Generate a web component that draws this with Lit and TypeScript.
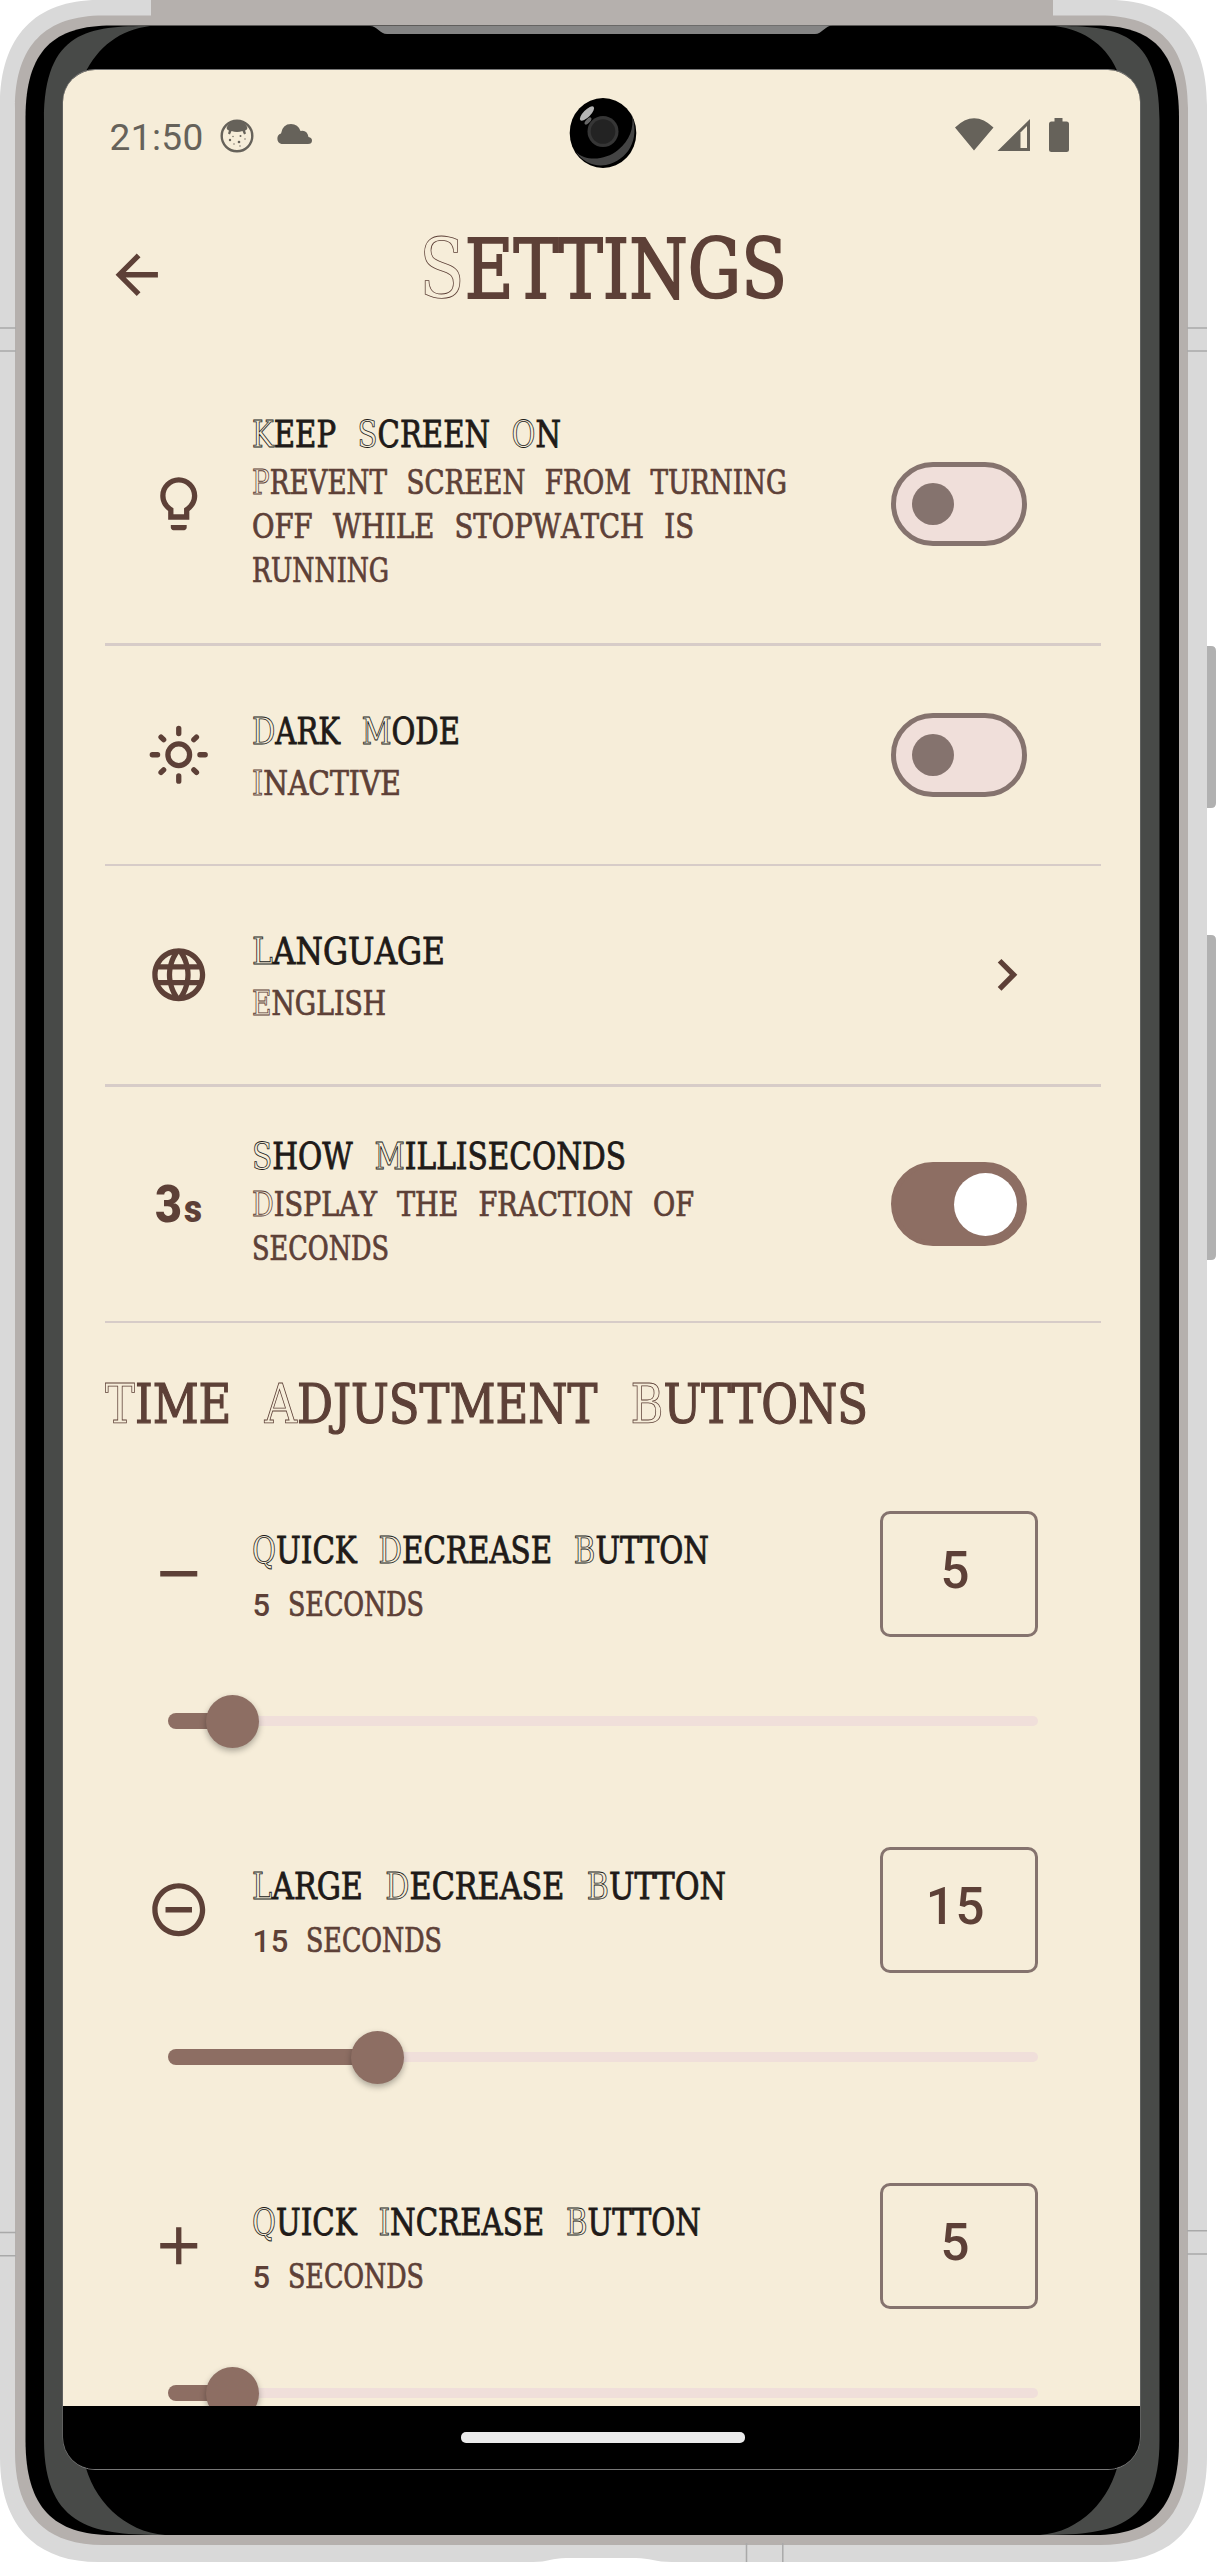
import { LitElement, html, svg, css } from "lit";
import { customElement, property } from "lit/decorators.js";

/** One line of display lettering: capitals are hollow, the rest is solid. */
@customElement("bone-line")
class BoneLine extends LitElement {
  @property() text = "";
  @property({ type: Number }) w = 100;
  @property({ type: Number }) size = 36.5;
  @property({ type: Number }) h = 48;
  @property({ type: Number }) base = 33;
  static styles = css`
    :host { display: block; }
    svg { display: block; overflow: visible; }
    text {
      font-family: "DejaVu Serif Condensed", "DejaVu Serif", serif;
      font-stretch: condensed;
      font-kerning: none;
      text-transform: uppercase;
      fill: currentColor;
      stroke: currentColor;
      stroke-width: 0.022em;
      word-spacing: 0.38em;
    }
    .cap { fill: transparent; stroke-width: 0.8px; }
  `;
  render() {
    const parts = this.text.split(/([A-Z]| )/).filter((p) => p.length > 0);
    return html`<svg width=${this.w} height=${this.h}><text x="0" y=${this.base} font-size=${this.size} textLength=${this.w} lengthAdjust="spacingAndGlyphs">${parts.map((p) =>
      /^[A-Z]$/.test(p) ? svg`<tspan class="cap">${p}</tspan>` : p)}</text></svg>`;
  }
}

@customElement("toggle-switch")
class ToggleSwitch extends LitElement {
  @property({ type: Boolean, reflect: true }) on = false;
  static styles = css`
    :host {
      display: flex; align-items: center; box-sizing: border-box;
      width: 136px; height: 84px; border-radius: 42px;
      border: 5px solid #85736e; background: #f0dfda; padding: 0 16px;
    }
    .knob { width: 42px; height: 42px; border-radius: 50%; background: #85736e; }
    :host([on]) { border-color: #8d6e63; background: #8d6e63; justify-content: flex-end; padding: 0 5px; }
    :host([on]) .knob { width: 63px; height: 63px; background: #fff; }
  `;
  render() { return html`<div class="knob"></div>`; }
}

const icons: Record<string, unknown> = {
  back: svg`<path d="M20 11H7.83l5.59-5.59L12 4l-8 8 8 8 1.41-1.41L7.83 13H20v-2z"/>`,
  bulb: svg`<path d="M9 21c0 .55.45 1 1 1h4c.55 0 1-.45 1-1v-1H9v1zm3-19C8.14 2 5 5.14 5 9c0 2.38 1.19 4.47 3 5.74V18h8v-3.26c1.81-1.27 3-3.36 3-5.74 0-3.86-3.14-7-7-7zm2.85 11.1l-.85.6V16h-4v-2.3l-.85-.6C7.8 12.16 7 10.63 7 9c0-2.76 2.24-5 5-5s5 2.24 5 5c0 1.63-.8 3.16-2.15 4.1z"/>`,
  sun: svg`<g fill="none" stroke="currentColor" stroke-width="2" stroke-linecap="round"><circle cx="12" cy="12" r="4.1"/><path d="M12 2v2M12 20v2M2 12h2M20 12h2M5.3 5.3l1 1M17.7 17.7l1 1M5.3 18.7l1-1M17.7 6.3l1-1"/></g>`,
  globe: svg`<path d="M11.99 2C6.47 2 2 6.48 2 12s4.47 10 9.99 10C17.52 22 22 17.52 22 12S17.52 2 11.99 2zm6.93 6h-2.95c-.32-1.25-.78-2.45-1.38-3.56 1.84.63 3.37 1.91 4.33 3.56zM12 4.04c.83 1.2 1.48 2.53 1.91 3.96h-3.82c.43-1.43 1.08-2.76 1.91-3.96zM4.26 14C4.1 13.36 4 12.69 4 12s.1-1.36.26-2h3.38c-.08.66-.14 1.32-.14 2s.06 1.34.14 2H4.26zm.82 2h2.95c.32 1.25.78 2.45 1.38 3.56-1.84-.63-3.37-1.9-4.33-3.56zm2.95-8H5.08c.96-1.66 2.49-2.93 4.33-3.56C8.81 5.55 8.35 6.75 8.03 8zM12 19.96c-.83-1.2-1.48-2.53-1.91-3.96h3.82c-.43 1.43-1.08 2.76-1.91 3.96zM14.34 14H9.66c-.09-.66-.16-1.32-.16-2s.07-1.35.16-2h4.68c.09.65.16 1.32.16 2s-.07 1.34-.16 2zm.25 5.56c.6-1.11 1.06-2.31 1.38-3.56h2.95c-.96 1.65-2.49 2.93-4.33 3.56zM16.36 14c.08-.66.14-1.32.14-2s-.06-1.34-.14-2h3.38c.16.64.26 1.31.26 2s-.1 1.36-.26 2h-3.38z"/>`,
  chevron: svg`<path d="M8.59 16.59L13.17 12 8.59 7.41 10 6l6 6-6 6-1.41-1.41z"/>`,
  minus: svg`<path d="M5 11h14v2H5z"/>`,
  plus: svg`<path d="M19 13h-6v6h-2v-6H5v-2h6V5h2v6h6v2z"/>`,
  minusCircle: svg`<path d="M7 11v2h10v-2H7zm5-9C6.48 2 2 6.48 2 12s4.48 10 10 10 10-4.48 10-10S17.52 2 12 2zm0 18c-4.41 0-8-3.59-8-8s3.59-8 8-8 8 3.59 8 8-3.59 8-8 8z"/>`,
};

@customElement("m-icon")
class MIcon extends LitElement {
  @property() name = "";
  static styles = css`
    :host { display: block; width: 63.5px; height: 63.5px; }
    svg { display: block; width: 100%; height: 100%; fill: currentColor; }
  `;
  render() { return html`<svg viewBox="0 0 24 24">${icons[this.name]}</svg>`; }
}

interface Adjuster { icon: string; title: string; titleW: number; value: number; digitW: number; thumb: number; }

const adjusters: Adjuster[] = [
  { icon: "minus", title: "Quick Decrease Button", titleW: 457, value: 5, digitW: 36, thumb: 63.5 },
  { icon: "minusCircle", title: "Large Decrease Button", titleW: 474, value: 15, digitW: 54, thumb: 209 },
  { icon: "plus", title: "Quick Increase Button", titleW: 449, value: 5, digitW: 36, thumb: 63.5 },
];

@customElement("app-root")
class AppRoot extends LitElement {
  static styles = css`
    :host { display: block; position: relative; width: 1216px; height: 2562px; background: #fff; overflow: hidden; color: #5d4037; font-family: Roboto, "Liberation Sans", sans-serif; }
    .frame { position: absolute; left: 0; top: 0; display: block; }
    .device { position: relative; box-sizing: border-box; height: 2562px; padding: 70px 76px 93px 62.5px; }
    .screen { height: 2399px; border-radius: 32px; overflow: hidden; display: flex; flex-direction: column; background: #000; }
    .app { height: 2336px; flex: none; overflow: hidden; background: #f6edd9; }
    .nav { flex: 1; display: flex; justify-content: center; align-items: flex-start; padding-top: 26px; }
    .pill { width: 284px; height: 11px; border-radius: 5px; background: #ebebeb; margin-left: 4px; }
    .status { display: flex; align-items: center; height: 132px; color: #66625a; padding: 0 66px 0 47px; }
    .clock { font-size: 37px; width: 94px; letter-spacing: 0.4px; padding-top: 2px; }
    .status svg { display: block; }
    .face { margin-left: 16px; margin-top: -1px; }
    .cloud { margin-left: 22px; margin-top: -4px; }
    .right { margin-left: auto; margin-top: -2px; }
    .bar { display: flex; align-items: center; height: 146px; padding-left: 42px; }
    .back { width: 314px; }
    .bar bone-line { margin-top: -11px; }
    .list { padding: 17px 39.5px 0 42px; }
    .row { display: grid; grid-template-columns: 147px 1fr auto; align-items: center; box-sizing: content-box; }
    .rule { border-bottom: 3px solid #d7ccc8; }
    .thin { border-bottom: 2px solid #d7ccc8; }
    .r1 { height: 278px; }
    .r2 { height: 218px; }
    .r4 { height: 234px; }
    .icon { display: flex; justify-content: center; padding-left: 1px; }
    .title { color: #201a18; }
    .gap { padding-top: 8px; }
    .gap .title { margin-bottom: 4px; }
    toggle-switch { margin-right: 74px; }
    .chev { margin-right: 62px; }
    .badge { display: block; margin-left: 3px; }
    .badge text { font-weight: 900; fill: currentColor; }
    .heading { padding: 49px 0 74px; }
    .adjust { height: 336px; }
    .adjust .row { height: 126px; }
    .adjust .text { padding-top: 10px; }
    .adjust .title { margin-bottom: 6px; }
    .amount { display: flex; align-items: flex-start; height: 44px; }
    .digits { font-size: 31px; font-weight: 500; line-height: 44px; padding-left: 1px; letter-spacing: 0.6px; box-sizing: border-box; }
    .box { box-sizing: border-box; width: 158px; height: 126px; border: 3px solid #85736e; border-radius: 10px; margin-right: 63px; display: flex; align-items: center; justify-content: center; font-size: 51px; font-weight: 500; padding: 0 6px 7px 0; letter-spacing: 0.8px; }
    .slider { display: flex; align-items: center; height: 52px; margin: 58px 63px 0 63.5px; }
    .active { height: 16px; border-radius: 8px 0 0 8px; background: #8d6e63; margin-right: -26px; flex: none; }
    .thumb { width: 53px; height: 53px; border-radius: 50%; background: #8d6e63; box-shadow: 0 3px 6px rgba(0,0,0,.3); flex: none; z-index: 1; }
    .track { flex: 1; height: 10px; border-radius: 0 5px 5px 0; background: #f0dfda; margin-left: -4px; }
  `;

  private frame() {
    return html`<svg class="frame" width="1216" height="2562" viewBox="0 0 1216 2562">
      <path fill="#b1b1b1" d="M1200 646h11q5 0 5 5v152q0 5-5 5h-11zM1200 935h11q5 0 5 5v315q0 5-5 5h-11z"/>
      <path fill="#d9d9d9" d="M98 0H1110C1172 0 1207 36 1207 105V2457C1207 2526 1172 2562 1105 2562H672C655 2562 650 2558 636 2558H566C552 2558 548 2562 533 2562H98C36 2562 0 2526 0 2457V105C0 36 36 0 98 0z"/>
      <path fill="#b5b0ad" d="M151 0H1053V15.500H1100C1158 15.500 1188 45 1188 108V2452C1188 2515 1158 2545 1100 2545H103C46 2545 15 2515 15 2452V108C15 45 46 15.500 103 15.500H151z"/>
      <path fill="#000" d="M112 25.500H1095C1152 25.500 1179 50 1179 118V2440C1179 2508 1152 2535 1095 2535H112C54 2535 25.500 2508 25.500 2440V118C25.500 50 54 25.500 112 25.500z"/>
      <path fill="#484a48" d="M150 26C90 26 44 30 44 120V2440C44 2530 98 2535 165 2535C125 2532 92 2500 84 2460V75C98 46 120 30 150 26z"/>
      <path fill="#484a48" d="M1055 26C1115 26 1159.500 30 1159.500 120V2440C1159.500 2530 1108 2535 1040 2535C1080 2532 1111 2500 1119 2460V75C1108 46 1085 30 1055 26z"/>
      <path fill="#858585" d="M370 26C377 26 380 34 387 34H815C822 34 825 25.500 833 25.500z"/>
      <rect x="63" y="69.500" width="1077" height="2400" rx="32" fill="none" stroke="#777" stroke-width="1"/>
      <g stroke="#a9a9a9" stroke-width="1.500"><path d="M0 328h16M0 351h16M1187 328h20M1187 351h20M0 2232.500h16M0 2255.700h16M1187 2230.700h20M1187 2254h20M746.500 2543v19M782.800 2543v19"/></g>
    </svg>`;
  }

  private camera() {
    return html`<svg class="frame" width="1216" height="200" viewBox="0 0 1216 200">
      <ellipse cx="603" cy="133" rx="33.300" ry="35"/>
      <path fill="#444" d="M632 115C640 140 628 160 606 165C594 167 583 162 576 152C586 162 606 160 618 150C630 140 634 128 632 115z"/>
      <circle cx="603" cy="131.500" r="15.500" fill="#363636"/><circle cx="603" cy="131.500" r="12.300" fill="#232323"/>
      <ellipse cx="587" cy="113.500" rx="9.500" ry="3.600" fill="#b4b4b4" transform="rotate(-46 587 113.500)"/>
      <ellipse cx="588" cy="121" rx="4.500" ry="2" fill="#666" transform="rotate(-48 588 121)"/>
    </svg>`;
  }

  render() {
    return html`
      ${this.frame()}
      <div class="device"><div class="screen">
        <div class="app">
          <div class="status">
            <span class="clock">21:50</span>
            <svg class="face" width="34" height="34" viewBox="0 0 34 34"><circle cx="17" cy="17" r="15.300" fill="none" stroke="currentColor" stroke-width="2.400"/><path fill="currentColor" d="M6.500 9Q7 6 10 4Q17 0 24 4Q27 6 27.500 9Q26.500 11.500 25 11.500L26 14.500L24 15.500L22.500 12Q17 14 11.500 12L10 15.500L8 14.500L9 11.500Q7.500 11.500 6.500 9z"/><g fill="currentColor"><circle cx="10" cy="21" r="1.200"/><circle cx="13" cy="17.500" r=".7"/><circle cx="20.500" cy="17" r="1"/><circle cx="25" cy="20" r=".7"/><circle cx="19" cy="23" r="1.300"/><circle cx="14" cy="25" r=".7"/><circle cx="20" cy="27" r=".7"/></g></svg>
            <svg class="cloud" width="36" height="20" viewBox="0 0 36 20"><path fill="currentColor" d="M5.500 20A5.500 5.500 0 0 1 5 9.500Q6.500 0 15 0Q22 0 24.500 7Q31 5.500 32.500 13Q36 13.500 36 16.500Q36 20 32 20z"/></svg>
            <svg class="right" width="120" height="36" viewBox="0 0 120 36" fill="currentColor"><path d="M1 10.500Q20-8 39.500 10.500L20 33.500zM43.500 34L76 2V34zM95 7q0-2.500 2.500-2.500h3V1h8v3.500h4q2.500 0 2.500 2.500v25.500q0 2.500-2.500 2.500H97.500q-2.500 0-2.500-2.500z"/><path fill="#f6edd9" d="M66.500 15.500L73 9V31H66.500z"/></svg>
          </div>
          <div class="bar">
            <div class="back"><m-icon name="back"></m-icon></div>
            <bone-line text="Settings" w="368" size="82" h="84" base="70"></bone-line>
          </div>
          <div class="list">
            <div class="row r1 rule">
              <div class="icon"><m-icon name="bulb"></m-icon></div>
              <div>
                <bone-line class="title" text="Keep Screen On" w="309"></bone-line>
                <bone-line text="Prevent screen from turning" w="535" size="33" h="44" base="32"></bone-line>
                <bone-line text="off while stopwatch is" w="442" size="33" h="44" base="32"></bone-line>
                <bone-line text="running" w="137" size="33" h="44" base="32"></bone-line>
              </div>
              <toggle-switch></toggle-switch>
            </div>
            <div class="row r2 thin">
              <div class="icon"><m-icon name="sun"></m-icon></div>
              <div class="gap">
                <bone-line class="title" text="Dark Mode" w="208"></bone-line>
                <bone-line text="Inactive" w="149" size="33" h="44" base="32"></bone-line>
              </div>
              <toggle-switch></toggle-switch>
            </div>
            <div class="row r2 rule">
              <div class="icon"><m-icon name="globe"></m-icon></div>
              <div class="gap">
                <bone-line class="title" text="Language" w="193"></bone-line>
                <bone-line text="English" w="134" size="33" h="44" base="32"></bone-line>
              </div>
              <m-icon class="chev" name="chevron"></m-icon>
            </div>
            <div class="row r4 thin">
              <div class="icon"><svg class="badge" width="50" height="64" viewBox="0 0 50 64"><text x="0" y="50" font-size="51" textLength="27" lengthAdjust="spacingAndGlyphs">3</text><text x="29" y="50" font-size="38" textLength="18" lengthAdjust="spacingAndGlyphs">s</text></svg></div>
              <div>
                <bone-line class="title" text="Show Milliseconds" w="374"></bone-line>
                <bone-line text="Display the fraction of" w="442" size="33" h="44" base="32"></bone-line>
                <bone-line text="seconds" w="137" size="33" h="44" base="32"></bone-line>
              </div>
              <toggle-switch on></toggle-switch>
            </div>
            <bone-line class="heading" text="Time Adjustment Buttons" w="763" size="54.5" h="65" base="51"></bone-line>
            ${adjusters.map((a) => html`
              <div class="adjust">
                <div class="row">
                  <div class="icon"><m-icon name=${a.icon}></m-icon></div>
                  <div class="text">
                    <bone-line class="title" text=${a.title} w=${a.titleW}></bone-line>
                    <div class="amount">
                      <span class="digits" style="width:${a.digitW}px">${a.value}</span>
                      <bone-line text="seconds" w="136" size="33" h="44" base="32"></bone-line>
                    </div>
                  </div>
                  <div class="box">${a.value}</div>
                </div>
                <div class="slider">
                  <div class="active" style="width:${a.thumb}px"></div>
                  <div class="thumb"></div>
                  <div class="track"></div>
                </div>
              </div>`)}
          </div>
        </div>
        <div class="nav"><div class="pill"></div></div>
      </div></div>
      ${this.camera()}
    `;
  }
}
